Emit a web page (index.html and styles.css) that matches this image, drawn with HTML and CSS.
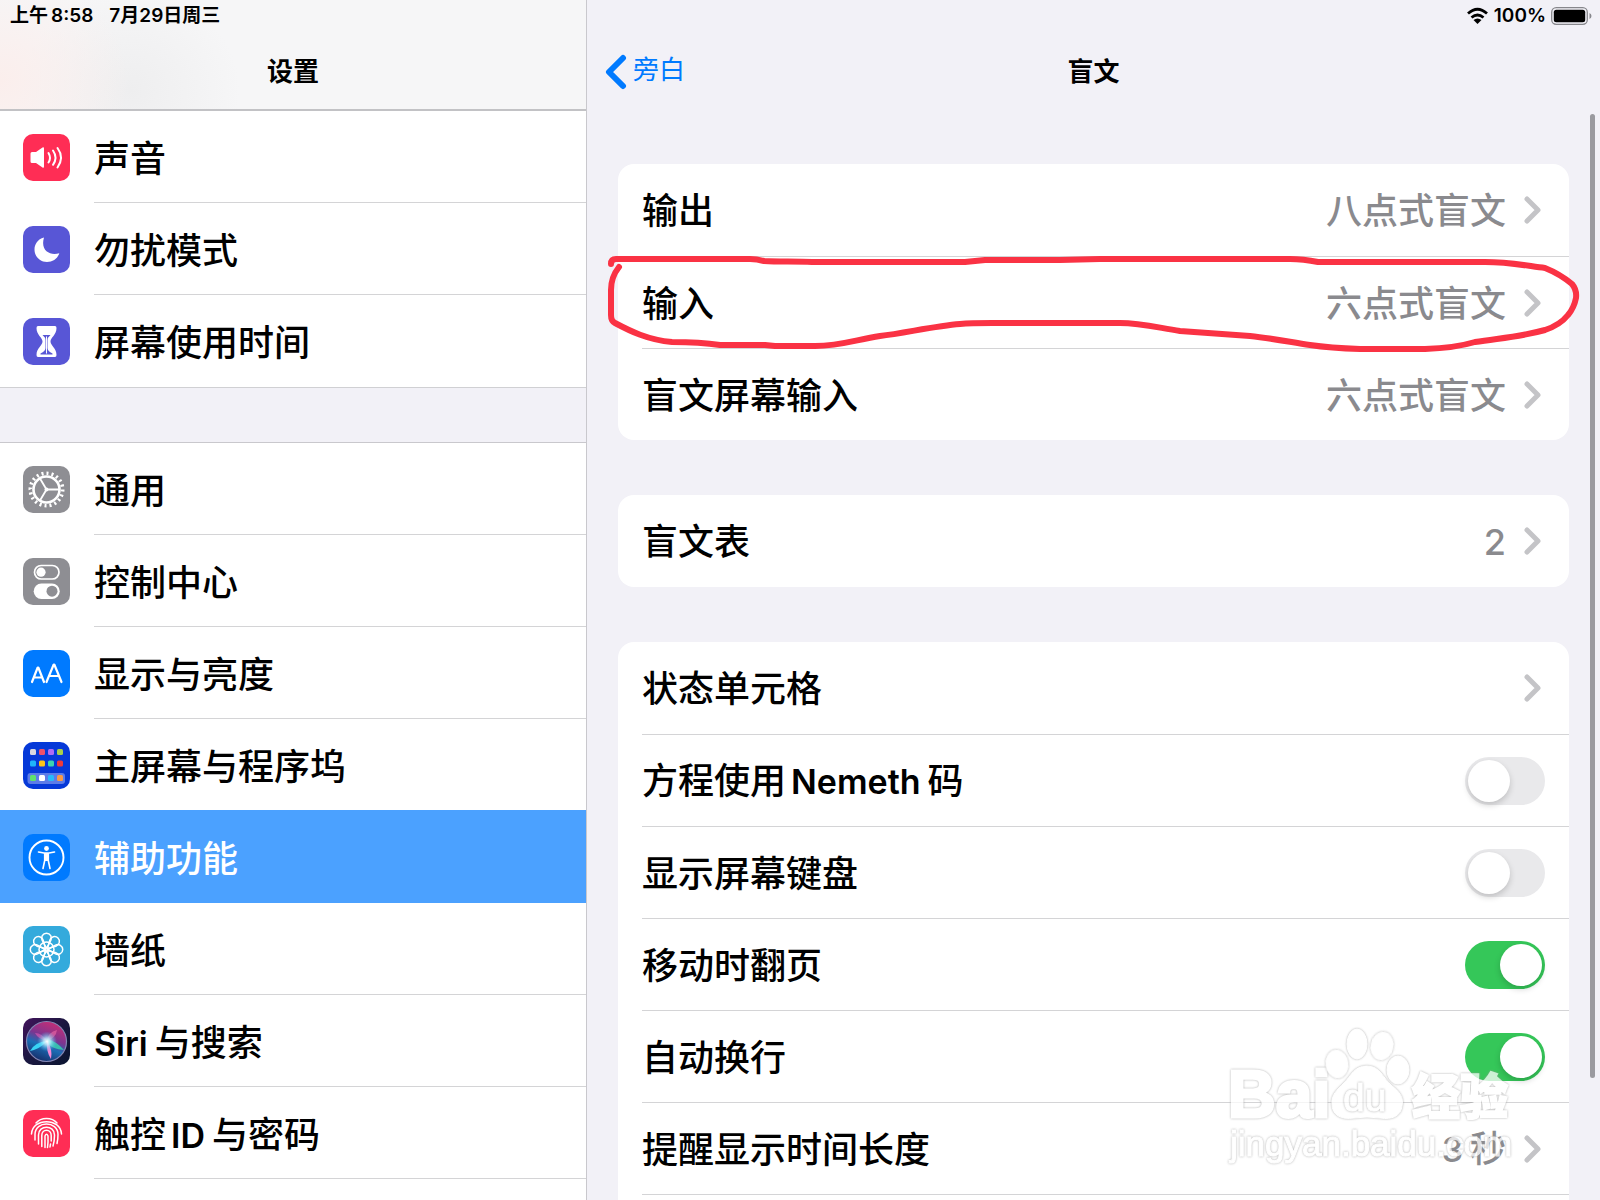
FILE: index.html
```html
<!DOCTYPE html>
<html lang="zh-CN">
<head>
  <meta charset="UTF-8" />
  <meta name="viewport" content="width=device-width, initial-scale=1" />
  <title>设置</title>
  <link rel="stylesheet" href="styles.css">
</head>
<body>
  <!-- Sidebar -->
  <aside class="sidebar">
    <header class="sidebar-header">
      <div class="status">
        <span>上午<span class="time">8:58</span></span>
        <span>7月29日周三</span>
      </div>
      <h1 class="title">设置</h1>
    </header>

    <nav class="menu">
      <a class="menu-item" href="#sound">
        <svg class="icon" viewBox="0 0 47 47">
          <rect width="47" height="47" rx="10" fill="#ff2d55"/>
          <path d="M7.500 19.500q0-1.500 1.500-1.500h4l6.500-4.500q1.500-.8 1.500 1v18q0 1.800-1.500 1L13 29H9q-1.500 0-1.500-1.500z" fill="#fff"/>
          <path d="M25.500 19q3 5 0 9.500M30 16.500q5 7.200 0 14.300M34.500 14q7 9.500 0 19.500" fill="none" stroke="#fff" stroke-width="2" stroke-linecap="round"/>
        </svg>
        <span class="label">声音</span>
      </a>
      <a class="menu-item" href="#dnd">
        <svg class="icon" viewBox="0 0 47 47">
          <rect width="47" height="47" rx="10" fill="#5856d6"/>
          <path d="M21 11.500C14.500 13 11.500 18.500 11.500 23.500c0 7 5.500 12.500 12.500 12.500 5.500 0 10.500-3 12.300-8.800-9 2.800-19.300-2.200-15.300-15.700z" fill="#fff"/>
        </svg>
        <span class="label">勿扰模式</span>
      </a>
      <a class="menu-item" href="#screentime">
        <svg class="icon" viewBox="0 0 47 47">
          <rect width="47" height="47" rx="10" fill="#5856d6"/>
          <path d="M15 8h17q1.500 0 1.500 2c0 7-6 9.500-6 13.500s6 6.500 6 13.500q0 2-1.500 2H15q-1.500 0-1.500-2c0-7 6-9.500 6-13.500s-6-6.500-6-13.500q0-2 1.500-2z" fill="#fff"/>
          <path d="M19.500 17h8q-3 2.500-3 5v8q0 3 5 5.500v1h-12v-1q5-2.500 5-5.500v-8q0-2.500-3-5z" fill="#5856d6"/>
          <path d="M23.500 18.500v17" stroke="#fff" stroke-width="1"/>
        </svg>
        <span class="label">屏幕使用时间</span>
      </a>

      <div class="menu-gap"></div>

      <a class="menu-item" href="#general">
        <svg class="icon" viewBox="0 0 47 47">
          <rect width="47" height="47" rx="10" fill="#8e8e93"/>
          <circle cx="23.500" cy="23.500" r="16.200" fill="none" stroke="#fff" stroke-width="3.600" pathLength="100" stroke-dasharray="2 3"/>
          <circle cx="23.500" cy="23.500" r="13" fill="none" stroke="#fff" stroke-width="2.600"/>
          <path d="M23.500 23.500H36M23.500 23.500L17 12.500M23.500 23.500L17 34.500" stroke="#fff" stroke-width="1.800"/>
          <circle cx="23.500" cy="23.500" r="2" fill="#fff"/>
        </svg>
        <span class="label">通用</span>
      </a>
      <a class="menu-item" href="#control">
        <svg class="icon" viewBox="0 0 47 47">
          <rect width="47" height="47" rx="10" fill="#8e8e93"/>
          <rect x="11.500" y="7.500" width="24.500" height="13.500" rx="6.700" fill="none" stroke="#fff" stroke-width="1.700"/>
          <circle cx="18" cy="14.200" r="4.600" fill="#fff"/>
          <rect x="10.700" y="25.500" width="26" height="15.500" rx="7.700" fill="#fff"/>
          <circle cx="29" cy="33.200" r="5.500" fill="#8e8e93"/>
        </svg>
        <span class="label">控制中心</span>
      </a>
      <a class="menu-item" href="#display">
        <svg class="icon" viewBox="0 0 47 47">
          <rect width="47" height="47" rx="10" fill="#007aff"/>
          <path d="M9 32l5.700-14.500h.6L21 32M11 27.500h8M23.500 32l7.200-17.500h.6L38.500 32M26 26h10" fill="none" stroke="#fff" stroke-width="2.200" stroke-linecap="round" stroke-linejoin="round"/>
        </svg>
        <span class="label">显示与亮度</span>
      </a>
      <a class="menu-item" href="#home">
        <svg class="icon" viewBox="0 0 47 47">
          <rect width="47" height="47" rx="10" fill="#0639d8"/>
          <rect x="4.500" y="31" width="37.500" height="11" rx="3" fill="#5c7ce8"/>
          <rect x="7" y="7" width="6" height="6" rx="1.500" fill="#d8d8e0"/>
          <rect x="16" y="7" width="6" height="6" rx="1.500" fill="#f0506a"/>
          <rect x="25" y="7" width="6" height="6" rx="1.500" fill="#af6cf5"/>
          <rect x="34" y="7" width="6" height="6" rx="1.500" fill="#a8d04a"/>
          <rect x="7" y="18.500" width="6" height="6" rx="1.500" fill="#1fb5fa"/>
          <rect x="16" y="18.500" width="6" height="6" rx="1.500" fill="#fcc419"/>
          <rect x="25" y="18.500" width="6" height="6" rx="1.500" fill="#3cd5b0"/>
          <rect x="34" y="18.500" width="6" height="6" rx="1.500" fill="#f03a3a"/>
          <rect x="7" y="33" width="6" height="6" rx="1.500" fill="#5fe36d"/>
          <rect x="16" y="33" width="6" height="6" rx="1.500" fill="#fff"/>
          <rect x="25" y="33" width="6" height="6" rx="1.500" fill="#27bcfb"/>
          <rect x="34" y="33" width="6" height="6" rx="1.500" fill="#fb9a45"/>
        </svg>
        <span class="label">主屏幕与程序坞</span>
      </a>
      <a class="menu-item active" href="#accessibility">
        <svg class="icon" viewBox="0 0 47 47">
          <rect width="47" height="47" rx="10" fill="#007aff"/>
          <circle cx="23.500" cy="23.500" r="17" fill="none" stroke="#fff" stroke-width="1.900"/>
          <circle cx="23.500" cy="14.500" r="2.400" fill="#fff"/>
          <path d="M15.500 18l5.500 1h5l5.500-1M21.700 20v6.500L20 34.500M25.300 20v6.500l1.700 8" fill="none" stroke="#fff" stroke-width="1.600" stroke-linecap="round" stroke-linejoin="round"/>
          <path d="M21 19h5v8h-5z" fill="#fff"/>
        </svg>
        <span class="label">辅助功能</span>
      </a>
      <a class="menu-item" href="#wallpaper">
        <svg class="icon" viewBox="0 0 47 47">
          <defs>
            <path id="petal" d="M23.500 22L19.200 14.500A4.900 4.900 0 1 1 27.800 14.500z"/>
          </defs>
          <rect width="47" height="47" rx="10" fill="#34aadc"/>
          <g fill="none" stroke="#fff" stroke-width="1.500">
            <use href="#petal"/>
            <use href="#petal" transform="rotate(45 23.500 23.500)"/>
            <use href="#petal" transform="rotate(90 23.500 23.500)"/>
            <use href="#petal" transform="rotate(135 23.500 23.500)"/>
            <use href="#petal" transform="rotate(180 23.500 23.500)"/>
            <use href="#petal" transform="rotate(225 23.500 23.500)"/>
            <use href="#petal" transform="rotate(270 23.500 23.500)"/>
            <use href="#petal" transform="rotate(315 23.500 23.500)"/>
            <circle cx="23.500" cy="23.500" r="7.500"/>
          </g>
        </svg>
        <span class="label">墙纸</span>
      </a>
      <a class="menu-item" href="#siri">
        <svg class="icon" viewBox="0 0 47 47">
          <defs>
            <linearGradient id="siriBg" x1="0" y1="0" x2="1" y2="1">
              <stop offset="0" stop-color="#43145c"/>
              <stop offset="0.500" stop-color="#1a1740"/>
              <stop offset="1" stop-color="#0a1530"/>
            </linearGradient>
            <linearGradient id="siriOrb" x1="0.700" y1="0" x2="0.300" y2="1">
              <stop offset="0" stop-color="#c92d74"/>
              <stop offset="0.400" stop-color="#7d3590"/>
              <stop offset="0.620" stop-color="#1b6cb4"/>
              <stop offset="1" stop-color="#162a66"/>
            </linearGradient>
            <radialGradient id="siriGlow">
              <stop offset="0" stop-color="#fff"/>
              <stop offset="0.350" stop-color="#bdf3ff" stop-opacity="0.800"/>
              <stop offset="1" stop-color="#3fb8f0" stop-opacity="0"/>
            </radialGradient>
          </defs>
          <rect width="47" height="47" rx="10" fill="url(#siriBg)"/>
          <circle cx="23.500" cy="23.500" r="20" fill="url(#siriOrb)" stroke="#8486b4" stroke-width="1.200"/>
          <path d="M24 23q-5-8-12-8 3 6 12 8z" fill="#e25bb5" opacity="0.600"/>
          <path d="M24 23q1-9 10-11-1 8-10 11z" fill="#f06aa8" opacity="0.600"/>
          <path d="M24 21q9 2 17 11-12-1-17-7z" fill="#35d0b0" opacity="0.850"/>
          <path d="M24 23Q17 31 7 33q5-9 17-10z" fill="#37d3f5"/>
          <path d="M24 22q6 10 4 19-5-7-4-19z" fill="#f58ad8"/>
          <circle cx="24" cy="23.500" r="10" fill="url(#siriGlow)"/>
        </svg>
        <span class="label"><span class="latin latin-start">Siri</span>与搜索</span>
      </a>
      <a class="menu-item" href="#touchid">
        <svg class="icon" viewBox="0 0 47 47">
          <rect width="47" height="47" rx="10" fill="#ff2d55"/>
          <g fill="none" stroke="#fff" stroke-width="1.500" stroke-linecap="round">
            <path d="M13 13C18 7 29 7 34 13"/>
            <path d="M8.500 24C9.500 7.500 37.500 7.500 38.500 24"/>
            <path d="M12 30V24.500C12 10.500 35 10.500 35 24.500q0 5-1 9"/>
            <path d="M15.500 34V25C15.500 14.500 31.500 14.500 31.500 25q0 6-1.500 11"/>
            <path d="M18.800 36.500V25.500C18.800 18.500 28.200 18.500 28.200 25.500V31"/>
            <path d="M22 37.500V26q1.500-3.500 3 0 .3 6-.5 11.500M27.500 34l-.5 3"/>
          </g>
        </svg>
        <span class="label">触控<span class="latin">ID</span>与密码</span>
      </a>
    </nav>
  </aside>

  <!-- Detail -->
  <main class="detail">
    <header class="detail-header">
      <div class="status status-right">
        <svg class="wifi" viewBox="0 0 23 18">
          <path d="M2 6.500q9.500-8.500 19 0M5.500 10.500q6-5 12 0" fill="none" stroke="#000" stroke-width="2.800"/>
          <path d="M7.500 13q4-3.200 8 0l-4 4z"/>
        </svg>
        <span>100%</span>
        <svg class="battery" viewBox="0 0 42 18">
          <rect x="0.700" y="0.700" width="35.600" height="16.600" rx="4.500" fill="none" stroke="#87878c" stroke-width="1.300"/>
          <rect x="2.800" y="2.800" width="31.400" height="12.400" rx="2.500"/>
          <path d="M38.500 6q2 1 2 3t-2 3z" fill="#87878c"/>
        </svg>
      </div>
      <div class="navbar">
        <a class="back" href="#voiceover">
          <svg class="back-arrow" viewBox="0 0 22 36"><path d="M18 4L4 18l14 14" fill="none" stroke="#007aff" stroke-width="6" stroke-linecap="round" stroke-linejoin="round"/></svg>
          <span>旁白</span>
        </a>
        <h2 class="title">盲文</h2>
      </div>
    </header>

    <div class="groups">
      <section class="card">
        <a class="row" href="#output">
          <span class="label">输出</span>
          <span class="value">八点式盲文</span>
          <svg class="chevron" viewBox="0 0 18 28"><path d="M3 3l11 11L3 25"/></svg>
        </a>
        <a class="row" href="#input">
          <span class="label">输入</span>
          <span class="value">六点式盲文</span>
          <svg class="chevron" viewBox="0 0 18 28"><path d="M3 3l11 11L3 25"/></svg>
          <!-- hand drawn marker round the row -->
          <svg class="marker" viewBox="602 248 983 108" preserveAspectRatio="none">
            <path d="M611 264Q611 259 616 259H750Q757 259 764 261C780 262 795 261 812 262H965L985 260H1060L1100 259H1290Q1303 259 1318 262H1485C1510 262 1528 266 1545 268Q1560 274 1572 284Q1577 290 1576 298Q1574 308 1568 315Q1560 325 1545 330C1520 337 1500 338 1475 342Q1455 348 1425 349H1360Q1330 348 1310 345C1290 342 1270 338 1250 336C1225 334 1205 333 1180 331C1155 327 1140 323 1120 323H992Q970 323 960 324C935 326 905 333 880 336C855 340 840 346 815 346H775L765 345H720Q700 342 672 342C648 340 630 331 615 323Q611 321 611 315V290Q611 277 619 267"/>
          </svg>
        </a>
        <a class="row" href="#screen-input">
          <span class="label">盲文屏幕输入</span>
          <span class="value">六点式盲文</span>
          <svg class="chevron" viewBox="0 0 18 28"><path d="M3 3l11 11L3 25"/></svg>
        </a>
      </section>

      <section class="card">
        <a class="row" href="#tables">
          <span class="label">盲文表</span>
          <span class="value">2</span>
          <svg class="chevron" viewBox="0 0 18 28"><path d="M3 3l11 11L3 25"/></svg>
        </a>
      </section>

      <section class="card">
        <a class="row" href="#cells">
          <span class="label">状态单元格</span>
          <svg class="chevron" viewBox="0 0 18 28"><path d="M3 3l11 11L3 25"/></svg>
        </a>
        <div class="row">
          <label class="label" for="nemeth">方程使用<span class="latin">Nemeth</span>码</label>
          <input class="switch" type="checkbox" id="nemeth">
        </div>
        <div class="row">
          <label class="label" for="keyboard">显示屏幕键盘</label>
          <input class="switch" type="checkbox" id="keyboard">
        </div>
        <div class="row">
          <label class="label" for="pan">移动时翻页</label>
          <input class="switch" type="checkbox" id="pan" checked>
        </div>
        <div class="row">
          <label class="label" for="wrap">自动换行</label>
          <input class="switch" type="checkbox" id="wrap" checked>
        </div>
        <a class="row" href="#duration">
          <span class="label">提醒显示时间长度</span>
          <span class="value"><span class="latin latin-start">3</span>秒</span>
          <svg class="chevron" viewBox="0 0 18 28"><path d="M3 3l11 11L3 25"/></svg>
        </a>
        <div class="row"></div>
      </section>
    </div>

    <div class="scrollbar"></div>

    <svg class="watermark" viewBox="0 0 300 150">
      <g class="mark">
        <text class="mark-bai" x="8" y="97">Bai</text>
        <ellipse cx="137" cy="24" rx="10" ry="15"/>
        <ellipse cx="162" cy="26" rx="11" ry="14" transform="rotate(12 162 26)"/>
        <ellipse cx="117" cy="44" rx="11" ry="14" transform="rotate(-8 117 44)"/>
        <ellipse cx="178" cy="50" rx="11" ry="14"/>
        <path d="M147 46C160 46 163 58 171 65C180 72 184 78 182 86C181 96 172 100 160 98Q147 96 134 98C121 100 112 95 112 84C111 75 117 70 124 63C131 56 134 46 147 46z"/>
        <text class="mark-du" x="123" y="91">du</text>
        <text class="mark-cn" x="192" y="94">经验</text>
        <text class="mark-url" x="10" y="136">jingyan.baidu.com</text>
      </g>
    </svg>
  </main>
</body>
</html>
```

FILE: styles.css
```css
* { box-sizing: border-box; }
body {
  margin: 0;
  height: 100vh;
  display: grid;
  grid-template-columns: 587px 1fr;
  overflow: hidden;
  font-family: "Inter", "Noto Sans CJK SC", sans-serif;
  font-weight: 500;
  color: #000;
  background: #f2f1f7;
}
a { color: inherit; text-decoration: none; }
svg { display: block; flex: none; }

.status {
  display: flex;
  gap: 16px;
  padding: 2px 10px 0;
  height: 32px;
  font-size: 19px;
  line-height: 28px;
  font-weight: 600;
}
.time { margin-left: 3px; }
.status-right {
  justify-content: flex-end;
  align-items: center;
  gap: 5px;
  padding: 0 7px 0 0;
}
.wifi { width: 23px; height: 18px; }
.battery { width: 42px; height: 18px; }
.title {
  margin: 0;
  font-size: 26px;
  line-height: 80px;
  font-weight: 600;
  text-align: center;
}

/* Sidebar */
.sidebar {
  display: flex;
  flex-direction: column;
  height: 100vh;
  overflow: hidden;
  background: #fff;
  border-right: 1px solid #c9c8cd;
}
.sidebar-header {
  flex: none;
  height: 111px;
  border-bottom: 2px solid #c2c2c5;
  background:
    radial-gradient(ellipse 130px 110px at 0 80px, #fbeeec 0%, rgba(251, 238, 236, 0) 100%),
    radial-gradient(ellipse 110px 100px at 130px 90px, #eeeeef 0%, rgba(238, 238, 239, 0) 100%),
    #f6f6f7;
}
.menu-item {
  display: flex;
  align-items: center;
  gap: 24px;
  height: 92px;
  padding-left: 23px;
}
.icon { width: 47px; height: 47px; }
.label {
  flex: 1;
  padding-top: 2px;
  font-size: 36px;
  line-height: 54px;
  white-space: nowrap;
}
.menu-item .label {
  height: 92px;
  line-height: 92px;
  border-bottom: 1px solid #d4d4d6;
}
.menu-item:has(+ .active) .label,
.menu-item:has(+ .menu-gap) .label,
.active .label { border-bottom-color: transparent; }
.menu-item.active {
  background: #4ba1ff;
  color: #fff;
  box-shadow: 0 -1px #4ba1ff;
}
.menu-gap {
  height: 56px;
  background: #f2f1f7;
  border-top: 1px solid #d0d0d3;
  border-bottom: 1px solid #c9c8cd;
}
.latin { margin: 0 7px 0 5px; font-size: 34px; font-weight: 600; }
.latin-start { margin-left: 0; }

/* Detail */
.detail {
  position: relative;
  height: 100vh;
  overflow: hidden;
}
.detail-header { height: 110px; }
.navbar {
  display: grid;
  grid-template-columns: 1fr auto 1fr;
  height: 78px;
}
.back {
  display: flex;
  align-items: center;
  gap: 6px;
  padding-left: 18px;
  color: #007aff;
  font-size: 26px;
  line-height: 74px;
  font-weight: 400;
}
.back span { height: 78px; }
.back-arrow { width: 22px; height: 36px; }
.groups {
  display: flex;
  flex-direction: column;
  gap: 55px;
  padding: 54px 31px 0;
}
.card {
  padding-left: 24px;
  background: #fff;
  border-radius: 16px;
}
.row {
  position: relative;
  display: flex;
  align-items: center;
  height: 92px;
  padding-right: 24px;
}
.row + .row { border-top: 1px solid #d4d4d6; }
.value {
  padding-top: 2px;
  font-size: 36px;
  line-height: 54px;
  color: #8a8a8e;
}
.value .latin { font-weight: 500; }
.chevron {
  width: 18px;
  height: 28px;
  margin: 0 3px 0 18px;
  fill: none;
  stroke: #c4c4c7;
  stroke-width: 5;
  stroke-linecap: round;
  stroke-linejoin: round;
}
.switch {
  appearance: none;
  width: 80px;
  height: 48px;
  margin: 0;
  padding: 3px;
  border-radius: 24px;
  background: #e9e9eb;
}
.switch::before {
  content: "";
  display: block;
  width: 42px;
  height: 42px;
  border-radius: 50%;
  background: #fff;
  box-shadow: 0 3px 6px rgba(0, 0, 0, 0.18);
}
.switch:checked { background: #35c759; }
.switch:checked::before { margin-left: auto; }

.marker {
  position: absolute;
  top: -9px;
  left: -40px;
  width: calc(100% + 56px);
  height: 108px;
  z-index: 1;
  fill: none;
  stroke: #fa3244;
  stroke-width: 6;
  stroke-linecap: round;
  stroke-linejoin: round;
  pointer-events: none;
}
.scrollbar {
  position: absolute;
  top: 114px;
  right: 5px;
  width: 5px;
  height: 964px;
  border-radius: 3px;
  background: #9a9a9f;
}

/* Watermark */
.watermark {
  position: absolute;
  right: 80px;
  bottom: 30px;
  width: 300px;
  height: 150px;
  pointer-events: none;
}
.mark {
  opacity: 0.75;
  fill: #fff;
  stroke: #fff;
  stroke-width: 1;
  font-family: "Liberation Sans", sans-serif;
}
.mark > * { filter: drop-shadow(0 0 1px #999); }
.mark-bai { font-size: 66px; font-weight: 700; stroke-width: 3; }
.mark-du { font-size: 39px; font-weight: 400; }
.mark-cn { font-family: "Noto Sans CJK SC", sans-serif; font-size: 48px; font-weight: 900; stroke-width: 2; }
.mark-url { font-size: 35px; }
```
